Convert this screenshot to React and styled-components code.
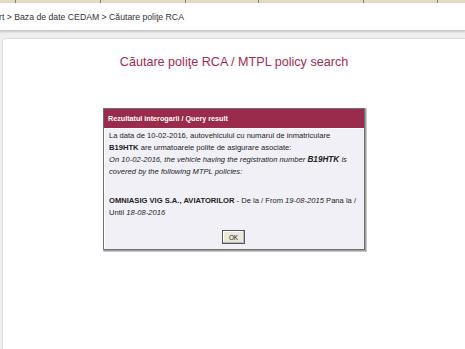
import React from "react";
import styled, { createGlobalStyle } from "styled-components";

const Global = createGlobalStyle`
  html, body { margin: 0; padding: 0; background: #fff; }
  body { font-family: "Liberation Sans", Arial, sans-serif; overflow: hidden; }
`;

const Page = styled.div`
  width: 465px;
  height: 349px;
  display: flex;
  flex-direction: column;
  overflow: hidden;
`;

const TopBar = styled.div`
  height: 3px;
  background: #e6dac4;
  display: flex;
  flex-shrink: 0;
`;

const TopCell = styled.div`
  width: ${(p) => p.$w}px;
  flex-shrink: 0;
  border-right: 1px solid #8c8070;
`;

const Breadcrumb = styled.div`
  height: 27px;
  display: flex;
  align-items: center;
  margin-left: -1px;
  font-size: 8.7px;
  color: #333;
  white-space: nowrap;
  flex-shrink: 0;
  border-bottom: 1px solid #c9c9c9;
  box-shadow: 0 1px 2px rgba(0, 0, 0, 0.18);
  position: relative;
  z-index: 1;
`;

const Backdrop = styled.div`
  flex: 1;
  background: #efefef;
  padding: 7px 0 0 2px;
  display: flex;
`;

const Panel = styled.div`
  flex: 1;
  background: #fff;
  border-top: 1px solid #dcdcdc;
  border-left: 1px solid #dcdcdc;
  border-top-left-radius: 4px;
  display: flex;
  flex-direction: column;
  align-items: center;
`;

const Title = styled.h1`
  margin: 15px 0 0 0;
  font-weight: normal;
  font-size: 12.6px;
  line-height: 16px;
  color: #a52a4f;
`;

const Dialog = styled.div`
  margin-top: 38px;
  width: 260px;
  border: 1px solid #6f6f6f;
  box-shadow: 1px 1px 0 #a0a0a0, 1px 1px 0 1px #c8c8c8;
  background: #f1f0f7;
`;

const DialogHeader = styled.div`
  height: 19px;
  background: #9b2b4c;
  border-bottom: 1px solid #fff;
  color: #fff;
  font-weight: bold;
  font-size: 7.2px;
  display: flex;
  align-items: center;
  padding-left: 4px;
`;

const DialogBody = styled.div`
  padding: 1px 3px 5px 4px;
  font-size: 7.6px;
  line-height: 12px;
  color: #222;
  border-left: 1px solid #fff;
`;

const Para = styled.p`
  margin: 0 0 ${(p) => p.$gap || 0}px 0;
`;

const Strong = styled.b`
  font-size: ${(p) => (p.$big ? "8.2px" : "inherit")};
`;

const Em = styled.i``;

const ButtonRow = styled.div`
  display: flex;
  justify-content: center;
  margin-top: 11px;
`;

const OkButton = styled.button`
  width: 23px;
  height: 14px;
  padding: 0;
  background: #ebe7da;
  border: 1px solid #555;
  box-shadow: inset -1px -1px 0 #bbb, inset 1px 1px 0 #fff;
  font-family: "Liberation Sans", Arial, sans-serif;
  font-size: 6.4px;
  color: #222;
  margin-left: -3px;
`;

const cells = [15, 84, 84, 72, 104, 73, 40];

export default function App() {
  return (
    <Page>
      <Global />
      <TopBar>
        {cells.map((w, i) => (
          <TopCell key={i} $w={w} />
        ))}
      </TopBar>
      <Breadcrumb>rt &gt; Baza de date CEDAM &gt; Căutare poliţe RCA</Breadcrumb>
      <Backdrop>
        <Panel>
          <Title>Căutare poliţe RCA / MTPL policy search</Title>
          <Dialog>
            <DialogHeader>Rezultatul interogarii / Query result</DialogHeader>
            <DialogBody>
              <Para $gap={17}>
                La data de 10-02-2016, autovehiculul cu numarul de inmatriculare{" "}
                <Strong>B19HTK</Strong> are urmatoarele polite de asigurare asociate:
                <br />
                <Em>
                  On 10-02-2016, the vehicle having the registration number{" "}
                  <Strong $big>B19HTK</Strong> is covered by the following MTPL policies:
                </Em>
              </Para>
              <Para>
                <Strong>OMNIASIG VIG S.A., AVIATORILOR</Strong> - De la / From{" "}
                <Em>19-08-2015</Em> Pana la / Until <Em>18-08-2016</Em>
              </Para>
              <ButtonRow>
                <OkButton>OK</OkButton>
              </ButtonRow>
            </DialogBody>
          </Dialog>
        </Panel>
      </Backdrop>
    </Page>
  );
}
